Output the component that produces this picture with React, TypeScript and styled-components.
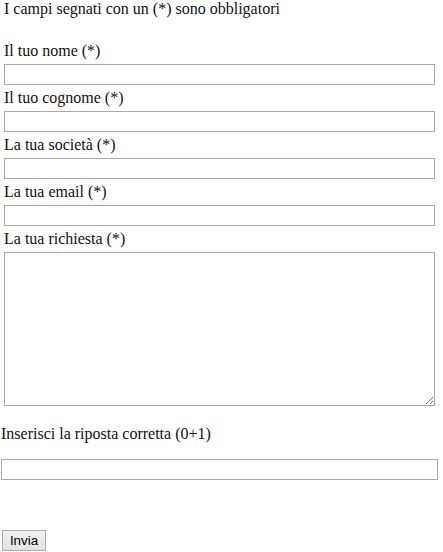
import styled, { createGlobalStyle } from "styled-components";

const GlobalStyle = createGlobalStyle`
  html, body {
    margin: 0;
    padding: 0;
    background: #fff;
  }
  body {
    font-family: "Liberation Serif", "Times New Roman", serif;
    font-size: 16px;
    color: #111;
  }
`;

const Form = styled.form`
  width: 443px;
  margin: 0;
`;

const Notice = styled.p`
  margin: 0 0 20px 4px;
  line-height: 18px;
`;

const Fields = styled.div`
  padding: 0 4px;
`;

const Label = styled.label`
  display: block;
  padding: 4px 0;
  line-height: 18px;
`;

const TextInput = styled.input<{ $wide?: boolean }>`
  display: block;
  box-sizing: border-box;
  width: ${({ $wide }) => ($wide ? "437px" : "431px")};
  height: 21px;
  margin: 0;
  padding: 1px 2px;
  border: 1px solid #a9a9a9;
  background: #fff;
  font-family: "Liberation Sans", Arial, sans-serif;
  font-size: 13.33px;
  outline: none;
`;

const TextArea = styled.textarea`
  display: block;
  box-sizing: border-box;
  width: 431px;
  height: 154px;
  margin: 0;
  padding: 2px;
  border: 1px solid #a9a9a9;
  background: #fff;
  font-family: "Liberation Mono", monospace;
  font-size: 13.33px;
  resize: both;
  outline: none;
`;

const Captcha = styled.div`
  padding-left: 1px;
`;

const Question = styled.p`
  margin: 19px 0 16px 0;
  line-height: 18px;
`;

const SubmitButton = styled.button`
  display: block;
  box-sizing: border-box;
  width: 44px;
  height: 21px;
  margin: 50px 0 0 1px;
  padding: 0 6px;
  border: 1px solid #adadad;
  border-radius: 0;
  background: linear-gradient(#f2f2f2, #e3e3e3);
  color: #000;
  font-family: "Liberation Sans", Arial, sans-serif;
  font-size: 13.33px;
  line-height: 17px;
`;

const fields = [
  { id: "nome", label: "Il tuo nome (*)" },
  { id: "cognome", label: "Il tuo cognome (*)" },
  { id: "societa", label: "La tua società (*)" },
  { id: "email", label: "La tua email (*)" },
];

export default function App() {
  return (
    <>
      <GlobalStyle />
      <Form onSubmit={(e) => e.preventDefault()}>
        <Notice>I campi segnati con un (*) sono obbligatori</Notice>
        <Fields>
          {fields.map((f) => (
            <div key={f.id}>
              <Label htmlFor={f.id}>{f.label}</Label>
              <TextInput id={f.id} type="text" />
            </div>
          ))}
          <Label htmlFor="richiesta">La tua richiesta (*)</Label>
          <TextArea id="richiesta" />
        </Fields>
        <Captcha>
          <Question>Inserisci la riposta corretta (0+1)</Question>
          <TextInput $wide type="text" />
          <SubmitButton type="submit">Invia</SubmitButton>
        </Captcha>
      </Form>
    </>
  );
}
